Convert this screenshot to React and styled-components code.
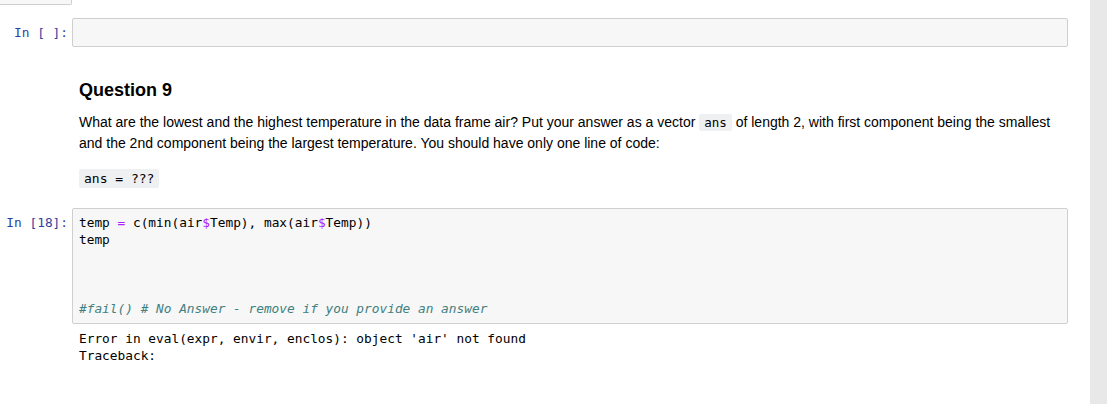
import styled, { createGlobalStyle } from 'styled-components'

const GlobalStyle = createGlobalStyle`
	html, body {
		margin: 0;
		padding: 0;
		background: #fff;
		height: 404px;
		overflow: hidden;
	}
`

const mono = `"DejaVu Sans Mono", "Liberation Mono", monospace`

const Page = styled.div`
	display: flex;
	height: 404px;
	font-family: "Liberation Sans", Arial, sans-serif;
	color: #000;
`

const Notebook = styled.div`
	flex: 1;
	display: flex;
	flex-direction: column;
	padding-right: 22px;
`

const Scrollbar = styled.div`
	width: 17px;
	background: #e8e8e8;
`

const PrevTail = styled.div`
	width: 71px;
	height: 4px;
	background: #f7f7f7;
	border-right: 1px solid #cfcfcf;
	border-bottom: 1px solid #cfcfcf;
	border-bottom-right-radius: 2px;
`

const CodeCell = styled.div`
	display: flex;
	align-items: flex-start;
	margin-top: ${({ $top }) => $top}px;
`

const Prompt = styled.div`
	width: 72px;
	flex-shrink: 0;
	box-sizing: border-box;
	padding: 6px 4px 0 0;
	text-align: right;
	font-family: ${mono};
	font-size: 12.8px;
	line-height: 17.2px;
	color: #303f9f;
	white-space: pre;
`

const Main = styled.div`
	flex: 1;
	min-width: 0;
`

const InputArea = styled.pre`
	margin: 0;
	box-sizing: border-box;
	background: #f7f7f7;
	border: 1px solid #cfcfcf;
	border-radius: 2px;
	padding: 5px 6px ${({ $tall }) => ($tall ? 6 : 5)}px;
	min-height: 29px;
	font-family: ${mono};
	font-size: 12.8px;
	line-height: 17.2px;
	color: #000;
`

const Op = styled.span`
	color: #aa22ff;
`

const Comment = styled.span`
	color: #408080;
	font-style: italic;
`

const Output = styled.pre`
	margin: 0;
	padding: 6px 7px 0;
	font-family: ${mono};
	font-size: 12.8px;
	line-height: 17px;
	color: #000;
`

const MarkdownCell = styled.div`
	padding-left: 79px;
	margin-top: 32px;
`

const Heading = styled.h3`
	margin: 0;
	font-size: 18px;
	line-height: 22px;
	font-weight: bold;
`

const Para = styled.p`
	margin: 11px 0 0;
	font-size: 14px;
	line-height: 21px;
`

const InlineCode = styled.code`
	font-family: ${mono};
	font-size: 12.5px;
	line-height: 17px;
	background: #eff0f1;
	padding: 1px 5px;
	border-radius: 2px;
`

const CodeBlock = styled.pre`
	display: inline-block;
	margin: 15px 0 0;
	padding: 1px 5px;
	background: #eff0f1;
	border-radius: 2px;
	font-family: ${mono};
	font-size: 13px;
	line-height: 17px;
`

export default function App() {
	return (
		<>
			<GlobalStyle />
			<Page>
				<Notebook>
					<PrevTail />
					<CodeCell $top={13}>
						<Prompt>In [ ]:</Prompt>
						<Main>
							<InputArea />
						</Main>
					</CodeCell>
					<MarkdownCell>
						<Heading>Question 9</Heading>
						<Para>
							What are the lowest and the highest temperature in the data frame air? Put your answer as a vector{' '}
							<InlineCode>ans</InlineCode> of length 2, with first component being the smallest and the 2nd
							component being the largest temperature. You should have only one line of code:
						</Para>
						<CodeBlock>ans = ???</CodeBlock>
					</MarkdownCell>
					<CodeCell $top={20}>
						<Prompt>In [18]:</Prompt>
						<Main>
							<InputArea $tall>
								temp <Op>=</Op> c(min(air<Op>$</Op>Temp), max(air<Op>$</Op>Temp)){'\n'}
								temp{'\n\n\n\n'}
								<Comment>#fail() # No Answer - remove if you provide an answer</Comment>
							</InputArea>
							<Output>
								Error in eval(expr, envir, enclos): object 'air' not found{'\n'}Traceback:
							</Output>
						</Main>
					</CodeCell>
				</Notebook>
				<Scrollbar />
			</Page>
		</>
	)
}
